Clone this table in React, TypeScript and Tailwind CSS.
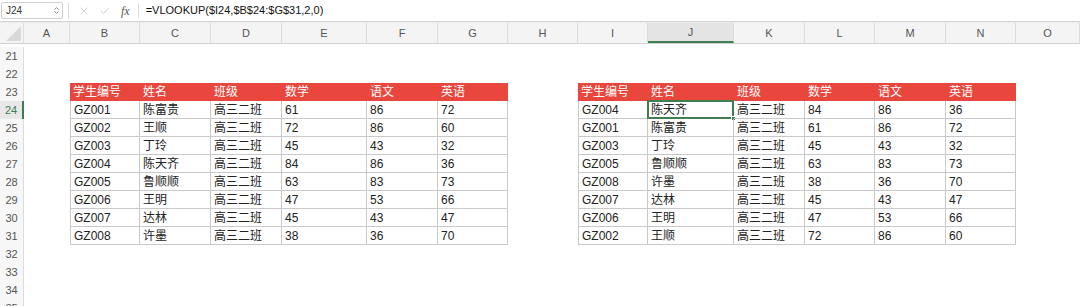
import { ChevronDown, ChevronUp, Check, X } from "lucide-react"

const cols = [
  { key: "A", w: "w-[46px]" },
  { key: "B", w: "w-[70px]" },
  { key: "C", w: "w-[71px]" },
  { key: "D", w: "w-[71px]" },
  { key: "E", w: "w-[85px]" },
  { key: "F", w: "w-[71px]" },
  { key: "G", w: "w-[70px]" },
  { key: "H", w: "w-[70px]" },
  { key: "I", w: "w-[70px]" },
  { key: "J", w: "w-[86px]" },
  { key: "K", w: "w-[71px]" },
  { key: "L", w: "w-[70px]" },
  { key: "M", w: "w-[71px]" },
  { key: "N", w: "w-[70px]" },
  { key: "O", w: "w-[64px]" },
]

const header = ["学生编号", "姓名", "班级", "数学", "语文", "英语"]

const left = [
  ["GZ001", "陈富贵", "高三二班", "61", "86", "72"],
  ["GZ002", "王顺", "高三二班", "72", "86", "60"],
  ["GZ003", "丁玲", "高三二班", "45", "43", "32"],
  ["GZ004", "陈天齐", "高三二班", "84", "86", "36"],
  ["GZ005", "鲁顺顺", "高三二班", "63", "83", "73"],
  ["GZ006", "王明", "高三二班", "47", "53", "66"],
  ["GZ007", "达林", "高三二班", "45", "43", "47"],
  ["GZ008", "许墨", "高三二班", "38", "36", "70"],
]

const right = [
  ["GZ004", "陈天齐", "高三二班", "84", "86", "36"],
  ["GZ001", "陈富贵", "高三二班", "61", "86", "72"],
  ["GZ003", "丁玲", "高三二班", "45", "43", "32"],
  ["GZ005", "鲁顺顺", "高三二班", "63", "83", "73"],
  ["GZ008", "许墨", "高三二班", "38", "36", "70"],
  ["GZ007", "达林", "高三二班", "45", "43", "47"],
  ["GZ006", "王明", "高三二班", "47", "53", "66"],
  ["GZ002", "王顺", "高三二班", "72", "86", "60"],
]

const rows = Array.from({ length: 15 }, (_, i) => 21 + i)

// value for a given sheet cell, or null when it lies outside both tables
const cellAt = (row: number, ci: number) => {
  if (row < 23 || row > 31) return null
  const li = ci - 1
  const ri = ci - 8
  const r = row - 24
  if (li >= 0 && li < 6) return { v: row === 23 ? header[li] : left[r][li], head: row === 23, first: li === 0 }
  if (ri >= 0 && ri < 6) return { v: row === 23 ? header[ri] : right[r][ri], head: row === 23, first: ri === 0 }
  return null
}

const App = () => {
  return (
    <div className="w-[1080px] h-[306px] overflow-hidden bg-white text-[#222] font-['Liberation_Sans','Noto_Sans_CJK_SC',sans-serif]">
      {/* formula bar */}
      <div className="flex items-center h-[22px] border-b border-[#d4d4d4] bg-white">
        <div className="flex items-center justify-between w-[62px] h-[17px] ml-[1px] pl-[4px] pr-[2px] border border-[#cfcfcf] rounded-[2px] text-[10px] text-[#333]">
          <span>J24</span>
          <div className="flex flex-col -space-y-[3px] text-[#777]">
            <ChevronUp size={7} strokeWidth={3} />
            <ChevronDown size={7} strokeWidth={3} />
          </div>
        </div>
        <div className="w-px h-[16px] bg-[#dcdcdc] ml-[5px]" />
        <X size={12} strokeWidth={1.5} className="ml-[9px] text-[#c4c4c4]" />
        <Check size={12} strokeWidth={1.5} className="ml-[9px] text-[#c4c4c4]" />
        <span className="ml-[10px] italic text-[12px] text-[#555] font-['Liberation_Serif',serif]">fx</span>
        <div className="w-px h-[14px] bg-[#dcdcdc] ml-[8px]" />
        <span className="ml-[7px] text-[11px] text-[#111]">=VLOOKUP($I24,$B$24:$G$31,2,0)</span>
      </div>
      <div className="h-[1px] bg-[#ececec]" />

      {/* column headers */}
      <div className="flex h-[21px] bg-[#f4f4f4] border-b border-[#d0d0d0]">
        <div className="relative w-[24px] border-r border-[#dcdcdc] overflow-hidden">
          <div className="absolute right-[2px] bottom-[2px] w-0 h-0 border-l-[15px] border-l-transparent border-b-[15px] border-b-[#d8d8d8]" />
        </div>
        {cols.map((c) => (
          <div
            key={c.key}
            className={`${c.w} shrink-0 flex items-center justify-center text-[11px] text-[#555] border-r border-[#dcdcdc] ${
              c.key === "J" ? "bg-[#e4e4e4] border-b-2 border-b-[#3f7d52]" : ""
            }`}
          >
            {c.key}
          </div>
        ))}
      </div>

      {/* sheet body */}
      <div className="flex flex-col pt-[3px]">
        {rows.map((row) => (
          <div key={row} className="flex h-[18px] shrink-0">
            <div
              className={`w-[24px] shrink-0 flex items-center justify-center text-[11px] border-r ${
                row === 24 ? "bg-[#e8e8e8] text-[#3f7d52] border-r-2 border-r-[#3f7d52]" : "bg-[#f7f7f7] text-[#555] border-[#dcdcdc]"
              }`}
            >
              {row}
            </div>
            {cols.map((c, ci) => {
              const cell = cellAt(row, ci)
              if (!cell) return <div key={c.key} className={`${c.w} shrink-0`} />
              const selected = row === 24 && c.key === "J"
              return (
                <div
                  key={c.key}
                  className={`relative ${c.w} shrink-0 flex items-center pl-[3px] text-[12px] leading-none whitespace-nowrap ${
                    cell.head
                      ? "bg-[#e9473e] text-white"
                      : `border-b border-r border-[#c9c9c9] ${cell.first ? "border-l" : ""}`
                  }`}
                >
                  {cell.v}
                  {selected && (
                    <>
                      <div className="absolute -left-[1px] -top-[1px] -right-[1px] -bottom-[1px] border-2 border-[#3f7d52]" />
                      <div className="absolute -right-[3px] -bottom-[3px] w-[5px] h-[5px] bg-[#3f7d52] border border-white" />
                    </>
                  )}
                </div>
              )
            })}
          </div>
        ))}
      </div>
    </div>
  )
}

export default App
